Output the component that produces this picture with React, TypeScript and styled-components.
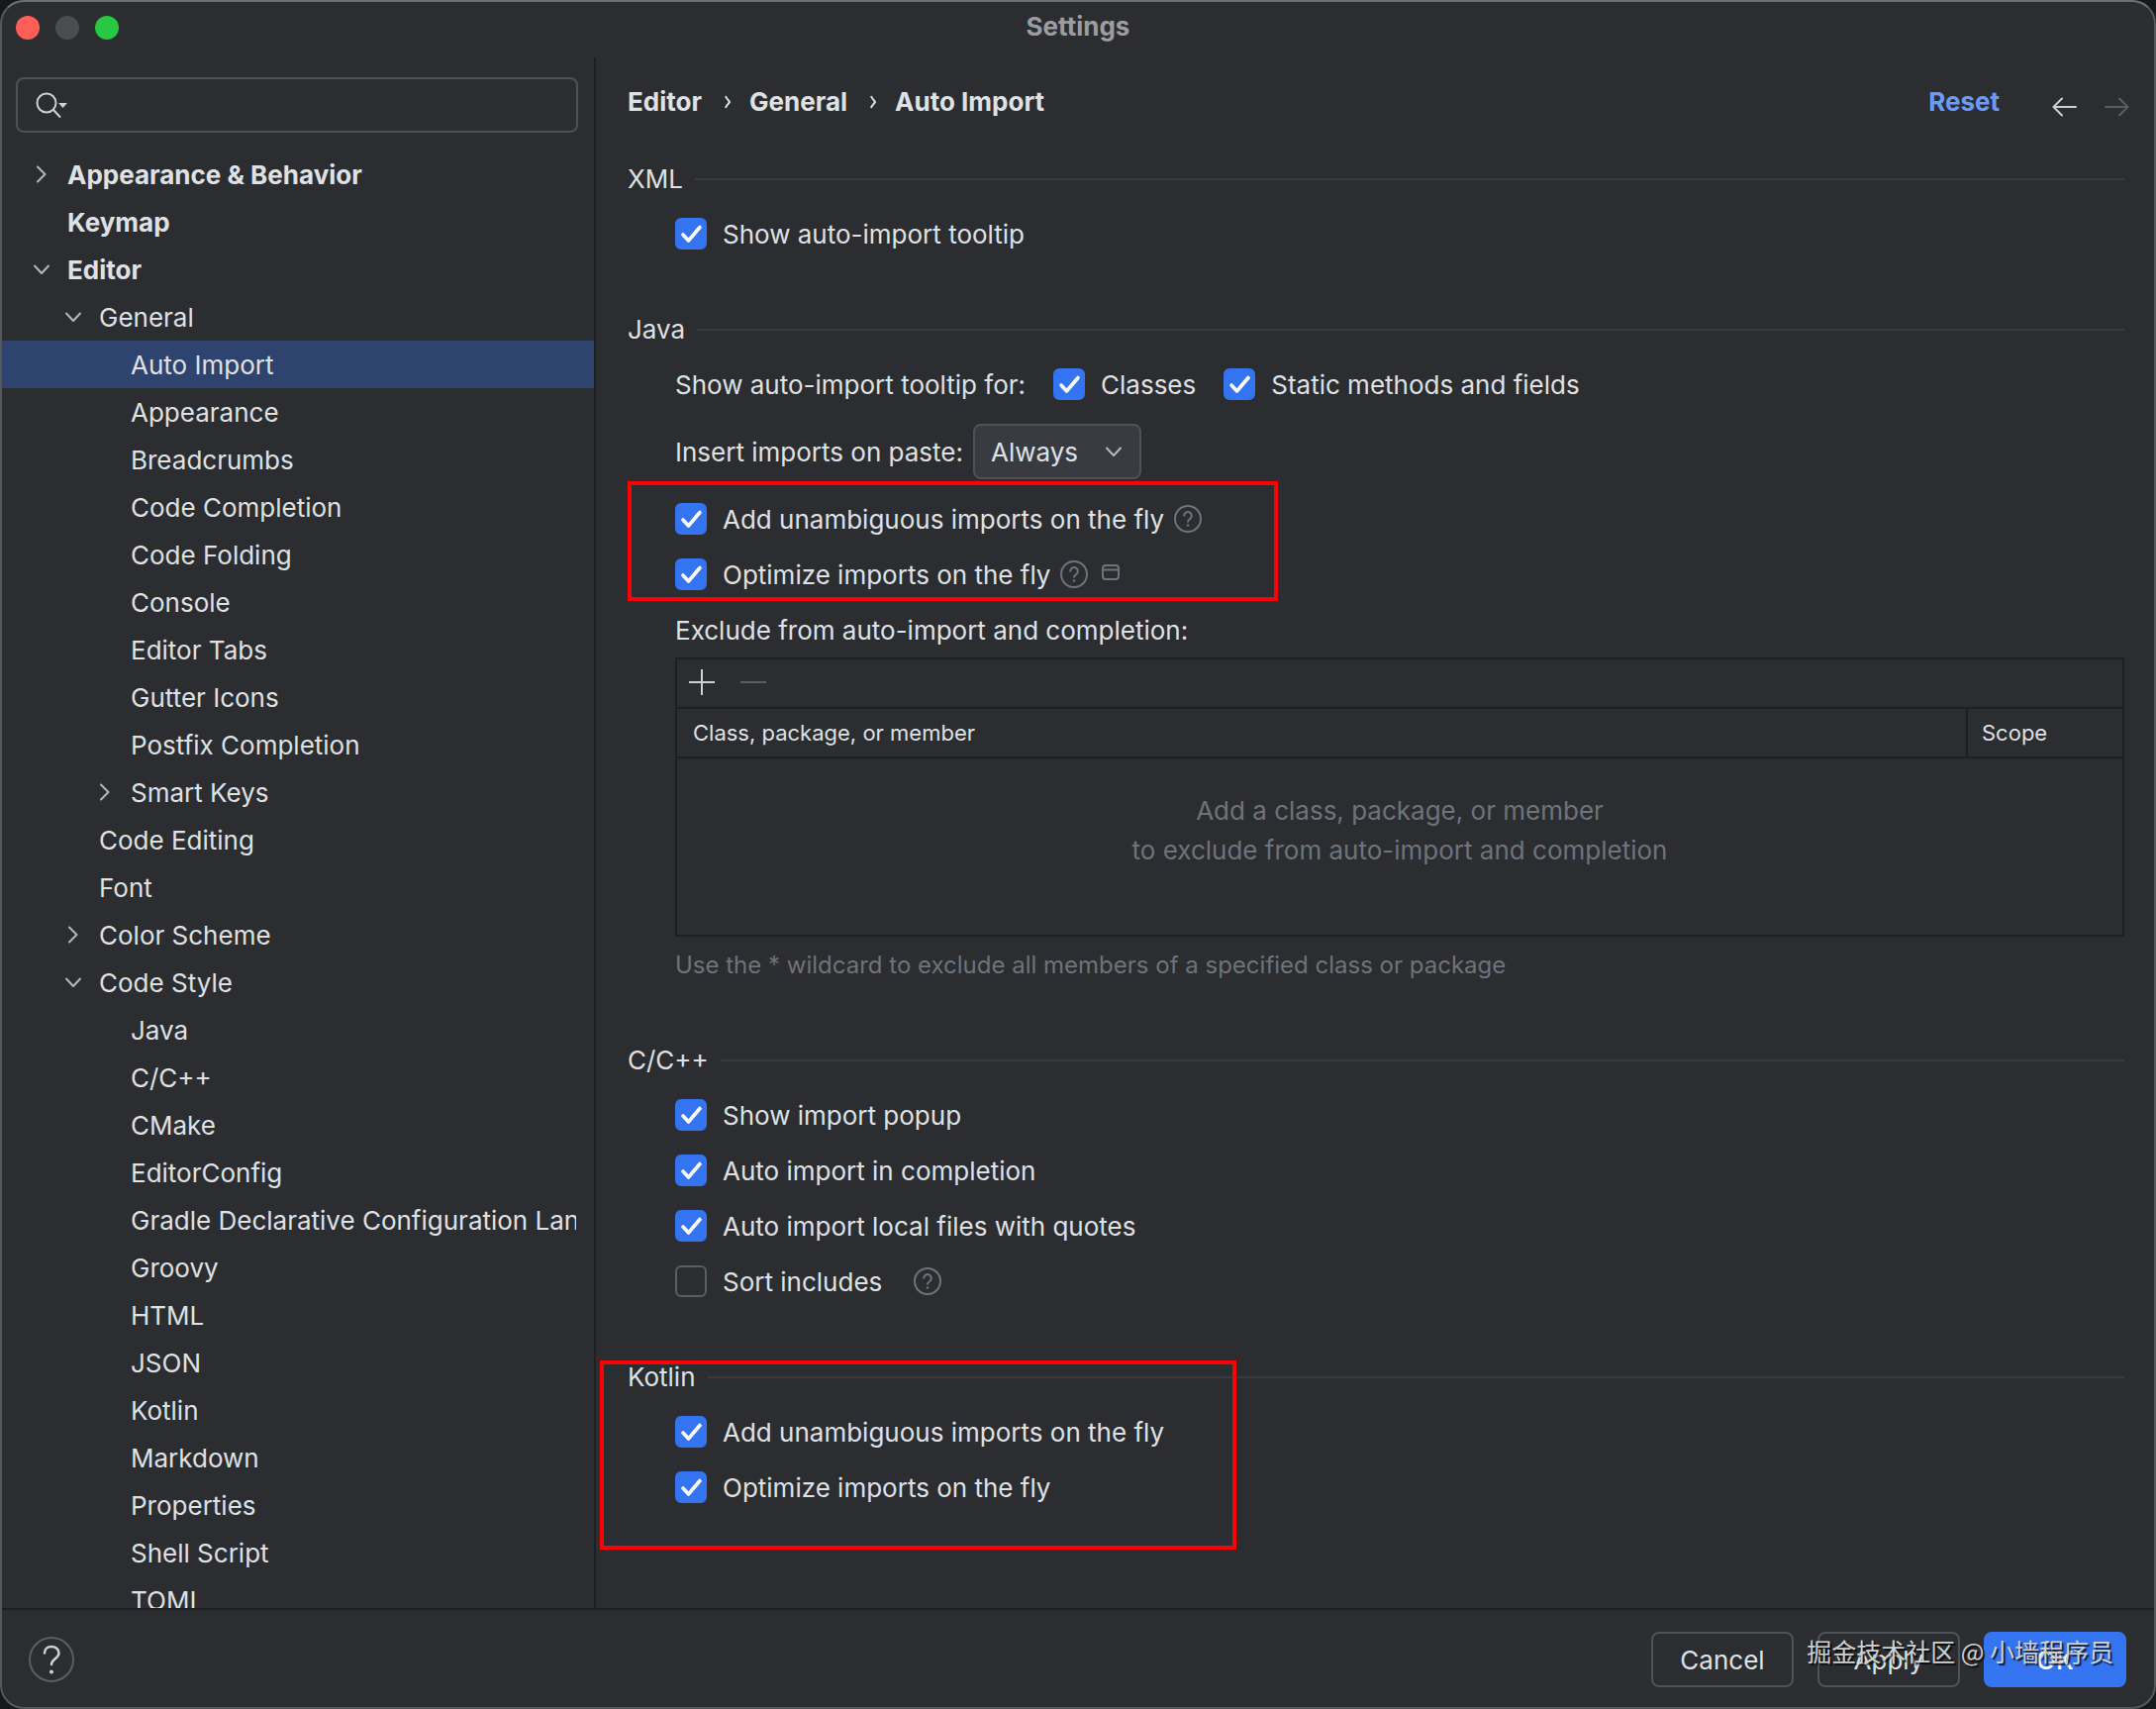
import React, { useState } from "react";
import styled, { createGlobalStyle, css } from "styled-components";

const color = {
  bg: "#2b2d30",
  text: "#dfe1e5",
  muted: "#6f737a",
  border: "#4e5157",
  line: "#393b40",
  dark: "#1e1f22",
  blue: "#3574f0",
  selection: "#2e436e",
};

const Global = createGlobalStyle`
  * { box-sizing: border-box; }
  body {
    margin: 0;
    background: #17181a;
    color: ${color.text};
    font-family: Inter, "Noto Sans CJK SC", sans-serif;
    font-size: 26px;
    line-height: 32px;
  }
  button, input, select { font: inherit; color: inherit; }
  button { background: none; border: 0; padding: 0; }
  h1, h2, p, ul { margin: 0; padding: 0; font: inherit; }
  svg { display: block; }
`;

const Window = styled.div`
  position: relative;
  display: flex;
  flex-direction: column;
  height: 100vh;
  overflow: hidden;
  background: ${color.bg};
  border: 2px solid #56585b;
  border-top-color: #6f7174;
  border-radius: 24px;
`;

const TitleBar = styled.header`
  display: grid;
  grid-template-columns: 1fr auto 1fr;
  align-items: center;
  height: 52px;
  margin-bottom: 4px;
  padding: 0 14px;
  flex: none;
`;

const Lights = styled.div`
  display: flex;
  gap: 16px;
`;

const Light = styled.button<{ $fill: string }>`
  width: 24px;
  height: 24px;
  border-radius: 50%;
  background: ${(p) => p.$fill};
`;

const Title = styled.h1`
  padding-bottom: 2px;
  font-weight: 700;
  color: #9c9da0;
`;

const Body = styled.div`
  display: flex;
  flex: 1;
  min-height: 0;
`;

const Sidebar = styled.aside`
  display: flex;
  flex-direction: column;
  flex: none;
  width: 600px;
  border-right: 2px solid ${color.dark};
  padding-top: 20px;
`;

const SearchBox = styled.label`
  display: flex;
  align-items: center;
  gap: 8px;
  height: 56px;
  margin: 0 16px 18px 14px;
  padding: 0 16px;
  border: 2px solid ${color.border};
  border-radius: 8px;
  flex: none;
`;

const SearchInput = styled.input`
  flex: 1;
  min-width: 0;
  border: 0;
  outline: 0;
  background: none;
`;

const Tree = styled.ul`
  flex: 1;
  min-height: 0;
  overflow: hidden;
  list-style: none;
`;

const TreeRow = styled.button<{ $level: number; $selected?: boolean; $bold?: boolean }>`
  display: flex;
  align-items: center;
  gap: 14px;
  width: 100%;
  height: 48px;
  padding-left: ${(p) => 28 + p.$level * 32}px;
  padding-right: 18px;
  text-align: left;
  font-weight: ${(p) => (p.$bold ? 700 : 400)};
  background: ${(p) => (p.$selected ? color.selection : "transparent")};
`;

const Arrow = styled.span`
  flex: none;
  width: 24px;
  height: 24px;
`;

const TreeLabel = styled.span`
  flex: 1;
  min-width: 0;
  padding-top: 2px;
  overflow: hidden;
  white-space: nowrap;
`;

const Content = styled.main`
  flex: 1;
  min-width: 0;
  padding: 0 30px 0 32px;
`;

const PageHeader = styled.div`
  display: flex;
  align-items: center;
  justify-content: space-between;
  height: 90px;
  margin-bottom: 6px;
  font-weight: 700;
`;

const Crumbs = styled.nav`
  display: flex;
  align-items: center;
`;

const Crumb = styled.a`
  color: inherit;
  text-decoration: none;
`;

const CrumbArrow = styled.svg`
  margin: 0 18px 0 22px;
`;

const HeaderActions = styled.div`
  display: flex;
  align-items: center;
`;

const Reset = styled.button`
  color: #6b9bfa;
  font-weight: 700;
  margin-right: 52px;
`;

const NavArrows = styled.div`
  display: flex;
  gap: 24px;
  padding-top: 10px;
  margin-right: -6px;
`;

const Section = styled.section`
  position: relative;
  margin-bottom: 42px;
`;

const SectionTitle = styled.h2`
  display: flex;
  align-items: center;
  gap: 12px;
  height: 54px;
  &::after {
    content: "";
    flex: 1;
    height: 2px;
    background: ${color.line};
  }
`;

const Marked = styled.div`
  position: relative;
`;

const Mark = styled.div<{ $left: number; $top: number; $width: number; $height: number }>`
  position: absolute;
  left: ${(p) => p.$left}px;
  top: ${(p) => p.$top}px;
  width: ${(p) => p.$width}px;
  height: ${(p) => p.$height}px;
  border: 4px solid #fb0207;
  pointer-events: none;
`;

const Row = styled.div<{ $gap?: number; $tall?: boolean }>`
  display: flex;
  align-items: center;
  gap: ${(p) => p.$gap ?? 10}px;
  height: ${(p) => (p.$tall ? 80 : 56)}px;
  padding-left: 48px;
`;

const RowText = styled.span`
  padding-top: 2px;
`;

const CheckLabel = styled.label`
  display: flex;
  align-items: center;
  gap: 16px;
`;

const CheckCell = styled.span`
  display: grid;
  width: 32px;
  height: 32px;
  & > * {
    grid-area: 1 / 1;
  }
`;

const CheckInput = styled.input`
  appearance: none;
  margin: 0;
  width: 32px;
  height: 32px;
  border-radius: 6px;
  border: 2px solid #5a5d63;
  &:checked {
    border-color: ${color.blue};
    background: ${color.blue};
  }
  & + svg {
    pointer-events: none;
    visibility: hidden;
  }
  &:checked + svg {
    visibility: visible;
  }
`;

const SelectCell = styled.span`
  display: grid;
  align-items: center;
  & > * {
    grid-area: 1 / 1;
  }
  & > svg {
    justify-self: end;
    margin-right: 16px;
    pointer-events: none;
  }
`;

const Select = styled.select`
  appearance: none;
  width: 170px;
  height: 56px;
  padding: 2px 16px 0;
  border: 2px solid ${color.border};
  border-radius: 8px;
  background: ${color.line};
`;

const ExcludePanel = styled.div`
  margin-left: 48px;
  border: 2px solid ${color.dark};
`;

const Toolbar = styled.div`
  display: flex;
  align-items: center;
  gap: 24px;
  height: 48px;
  padding: 0 11px 2px;
`;

const Table = styled.table`
  width: 100%;
  border-collapse: collapse;
  table-layout: fixed;
`;

const Th = styled.th<{ $width?: number }>`
  width: ${(p) => (p.$width ? `${p.$width}px` : "auto")};
  height: 50px;
  padding: 0 16px;
  border-top: 2px solid ${color.dark};
  border-bottom: 2px solid ${color.dark};
  text-align: left;
  font-size: 22px;
  font-weight: 400;
  & + & {
    border-left: 2px solid ${color.dark};
    padding-left: 14px;
  }
`;

const Empty = styled.td`
  height: 179px;
  padding: 33px 0 0;
  vertical-align: top;
  text-align: center;
  line-height: 40px;
  color: ${color.muted};
`;

const Hint = styled.p`
  display: flex;
  align-items: center;
  height: 56px;
  padding-top: 2px;
  padding-left: 48px;
  font-size: 24px;
  color: ${color.muted};
`;

const Footer = styled.footer`
  display: flex;
  align-items: center;
  justify-content: space-between;
  flex: none;
  height: 100px;
  padding: 2px 28px 0 27px;
  border-top: 2px solid ${color.dark};
`;

const Buttons = styled.div`
  position: relative;
  display: flex;
  gap: 24px;
`;

const Button = styled.button<{ $primary?: boolean }>`
  width: 144px;
  height: 56px;
  padding-top: 2px;
  border: 2px solid ${color.border};
  border-radius: 8px;
  ${(p) =>
    p.$primary &&
    css`
      color: #fff;
      font-weight: 500;
      background: ${color.blue};
      border-color: ${color.blue};
    `}
`;

const Watermark = styled.span`
  position: absolute;
  right: 13px;
  top: 3px;
  white-space: nowrap;
  font-family: "Noto Sans CJK SC", sans-serif;
  font-size: 25px;
  color: #d0d0d0;
  text-shadow: 2px 2px 1px rgba(0, 0, 0, 0.75);
  pointer-events: none;
`;

const Chevron = ({ open }: { open: boolean }) => (
  <svg width="24" height="24" viewBox="0 0 24 24" fill="none" stroke="#b4b8bf" strokeWidth="2" strokeLinecap="round" strokeLinejoin="round">
    <path d={open ? "M5 8.5 12 16 19 8.5" : "M8 4.5 15.5 12 8 19.5"} />
  </svg>
);

const Check = ({ label, on = true }: { label: string; on?: boolean }) => (
  <CheckLabel>
    <CheckCell>
      <CheckInput type="checkbox" defaultChecked={on} />
      <svg width="32" height="32" viewBox="0 0 32 32" fill="none" stroke="#fff" strokeWidth="3.6" strokeLinecap="round" strokeLinejoin="round">
        <path d="M8 17 13.5 23 25 9.5" />
      </svg>
    </CheckCell>
    <RowText>{label}</RowText>
  </CheckLabel>
);

const Help = () => (
  <svg width="28" height="28" viewBox="0 0 28 28" fill="none" stroke="#6f737a" strokeWidth="2" strokeLinecap="round">
    <circle cx="14" cy="14" r="13" />
    <path d="M10.2 10.8a3.8 3.8 0 1 1 6.2 3c-1.500 1.100-2.400 1.700-2.400 3" />
    <circle cx="14" cy="20.500" r="1.300" fill="#6f737a" stroke="none" />
  </svg>
);

type Item = { label: string; level: number; open?: boolean };

const items: Item[] = [
  { label: "Appearance & Behavior", level: 0, open: false },
  { label: "Keymap", level: 0 },
  { label: "Editor", level: 0, open: true },
  { label: "General", level: 1, open: true },
  { label: "Auto Import", level: 2 },
  { label: "Appearance", level: 2 },
  { label: "Breadcrumbs", level: 2 },
  { label: "Code Completion", level: 2 },
  { label: "Code Folding", level: 2 },
  { label: "Console", level: 2 },
  { label: "Editor Tabs", level: 2 },
  { label: "Gutter Icons", level: 2 },
  { label: "Postfix Completion", level: 2 },
  { label: "Smart Keys", level: 2, open: false },
  { label: "Code Editing", level: 1 },
  { label: "Font", level: 1 },
  { label: "Color Scheme", level: 1, open: false },
  { label: "Code Style", level: 1, open: true },
  { label: "Java", level: 2 },
  { label: "C/C++", level: 2 },
  { label: "CMake", level: 2 },
  { label: "EditorConfig", level: 2 },
  { label: "Gradle Declarative Configuration Language", level: 2 },
  { label: "Groovy", level: 2 },
  { label: "HTML", level: 2 },
  { label: "JSON", level: 2 },
  { label: "Kotlin", level: 2 },
  { label: "Markdown", level: 2 },
  { label: "Properties", level: 2 },
  { label: "Shell Script", level: 2 },
  { label: "TOML", level: 2 },
];

const Separator = () => (
  <CrumbArrow width="8" height="16" viewBox="0 0 8 16" fill="none" stroke={color.text} strokeWidth="2">
    <path d="M2 2c1 3 3 4 4 6-1 2-3 3-4 6" />
  </CrumbArrow>
);

export default function App() {
  const [selected, setSelected] = useState("Auto Import");
  return (
    <>
      <Global />
      <Window>
        <TitleBar>
          <Lights>
            <Light $fill="#ff5f57" aria-label="Close" />
            <Light $fill="#4b4d4f" aria-label="Minimize" />
            <Light $fill="#28c840" aria-label="Zoom" />
          </Lights>
          <Title>Settings</Title>
        </TitleBar>
        <Body>
          <Sidebar>
            <SearchBox>
              <svg width="34" height="32" viewBox="0 0 34 32" fill="none" stroke="#ced0d6" strokeWidth="2" strokeLinecap="round">
                <circle cx="13" cy="14" r="9.500" />
                <path d="M20 21 26.500 28" />
                <path d="M25 14h9l-4.500 5z" fill="#ced0d6" stroke="none" />
              </svg>
              <SearchInput type="search" aria-label="Search settings" />
            </SearchBox>
            <Tree>
              {items.map((item, i) => (
                <li key={i}>
                  <TreeRow
                    $level={item.level}
                    $bold={item.level === 0}
                    $selected={item.label === selected}
                    onClick={() => setSelected(item.label)}
                  >
                    <Arrow>{item.open !== undefined && <Chevron open={item.open} />}</Arrow>
                    <TreeLabel>{item.label}</TreeLabel>
                  </TreeRow>
                </li>
              ))}
            </Tree>
          </Sidebar>
          <Content>
            <PageHeader>
              <Crumbs>
                <Crumb href="#editor">Editor</Crumb>
                <Separator />
                <Crumb href="#general">General</Crumb>
                <Separator />
                <Crumb href="#auto-import">Auto Import</Crumb>
              </Crumbs>
              <HeaderActions>
                <Reset>Reset</Reset>
                <NavArrows>
                  <button aria-label="Back">
                    <svg width="28" height="24" viewBox="0 0 28 24" fill="none" stroke="#ced0d6" strokeWidth="2" strokeLinecap="round" strokeLinejoin="round">
                      <path d="M25 12H3M11 3.500 2.500 12l8.500 8.500" />
                    </svg>
                  </button>
                  <button aria-label="Forward" disabled>
                    <svg width="28" height="24" viewBox="0 0 28 24" fill="none" stroke="#5a5d63" strokeWidth="2" strokeLinecap="round" strokeLinejoin="round">
                      <path d="M3 12h22M17 3.500 25.500 12 17 20.500" />
                    </svg>
                  </button>
                </NavArrows>
              </HeaderActions>
            </PageHeader>

            <Section>
              <SectionTitle>XML</SectionTitle>
              <Row>
                <Check label="Show auto-import tooltip" />
              </Row>
            </Section>

            <Section>
              <SectionTitle>Java</SectionTitle>
              <Row $gap={28}>
                <RowText>Show auto-import tooltip for:</RowText>
                <Check label="Classes" />
                <Check label="Static methods and fields" />
              </Row>
              <Row $tall>
                <RowText as="label" htmlFor="paste">
                  Insert imports on paste:
                </RowText>
                <SelectCell>
                  <Select id="paste" defaultValue="Always">
                    <option>Always</option>
                    <option>Ask</option>
                    <option>Never</option>
                  </Select>
                  <Chevron open />
                </SelectCell>
              </Row>
              <Marked>
                <Row>
                  <Check label="Add unambiguous imports on the fly" />
                  <Help />
                </Row>
                <Row>
                  <Check label="Optimize imports on the fly" />
                  <Help />
                  <svg width="24" height="20" viewBox="-4 0 24 20" fill="none" stroke="#6f737a" strokeWidth="2">
                    <rect x="1" y="1" width="16" height="14" rx="3" />
                    <path d="M1 5.500h16" />
                  </svg>
                </Row>
                <Mark $left={0} $top={-10} $width={657} $height={121} />
              </Marked>
              <Row>
                <RowText>Exclude from auto-import and completion:</RowText>
              </Row>
              <ExcludePanel>
                <Toolbar>
                  <button aria-label="Add">
                    <svg width="28" height="28" viewBox="0 0 28 28" stroke="#ced0d6" strokeWidth="2">
                      <path d="M1 14h26M14 1v26" />
                    </svg>
                  </button>
                  <button aria-label="Remove" disabled>
                    <svg width="28" height="28" viewBox="0 0 28 28" stroke="#5a5d63" strokeWidth="2">
                      <path d="M1 14h26" />
                    </svg>
                  </button>
                </Toolbar>
                <Table>
                  <thead>
                    <tr>
                      <Th>Class, package, or member</Th>
                      <Th $width={157}>Scope</Th>
                    </tr>
                  </thead>
                  <tbody>
                    <tr>
                      <Empty colSpan={2}>
                        Add a class, package, or member
                        <br />
                        to exclude from auto-import and completion
                      </Empty>
                    </tr>
                  </tbody>
                </Table>
              </ExcludePanel>
              <Hint>Use the * wildcard to exclude all members of a specified class or package</Hint>
            </Section>

            <Section>
              <SectionTitle>C/C++</SectionTitle>
              <Row>
                <Check label="Show import popup" />
              </Row>
              <Row>
                <Check label="Auto import in completion" />
              </Row>
              <Row>
                <Check label="Auto import local files with quotes" />
              </Row>
              <Row $gap={32}>
                <Check label="Sort includes" on={false} />
                <Help />
              </Row>
            </Section>

            <Section>
              <SectionTitle>Kotlin</SectionTitle>
              <Row>
                <Check label="Add unambiguous imports on the fly" />
              </Row>
              <Row>
                <Check label="Optimize imports on the fly" />
              </Row>
              <Mark $left={-28} $top={10} $width={643} $height={191} />
            </Section>
          </Content>
        </Body>
        <Footer>
          <button aria-label="Help">
            <svg width="46" height="46" viewBox="0 0 46 46" fill="none" stroke="#ced0d6" strokeWidth="2.500" strokeLinecap="round">
              <circle cx="23" cy="23" r="22" stroke="#5a5d63" strokeWidth="2" />
              <path d="M16 16.500c0-4 3-6.500 7-6.500s7.500 2.500 7.500 6.500c0 5.500-7.500 6-7.500 11.500" />
              <circle cx="23" cy="35.500" r="2" fill="#ced0d6" stroke="none" />
            </svg>
          </button>
          <Buttons>
            <Button>Cancel</Button>
            <Button>Apply</Button>
            <Button $primary>OK</Button>
            <Watermark>掘金技术社区 @ 小墙程序员</Watermark>
          </Buttons>
        </Footer>
      </Window>
    </>
  );
}
